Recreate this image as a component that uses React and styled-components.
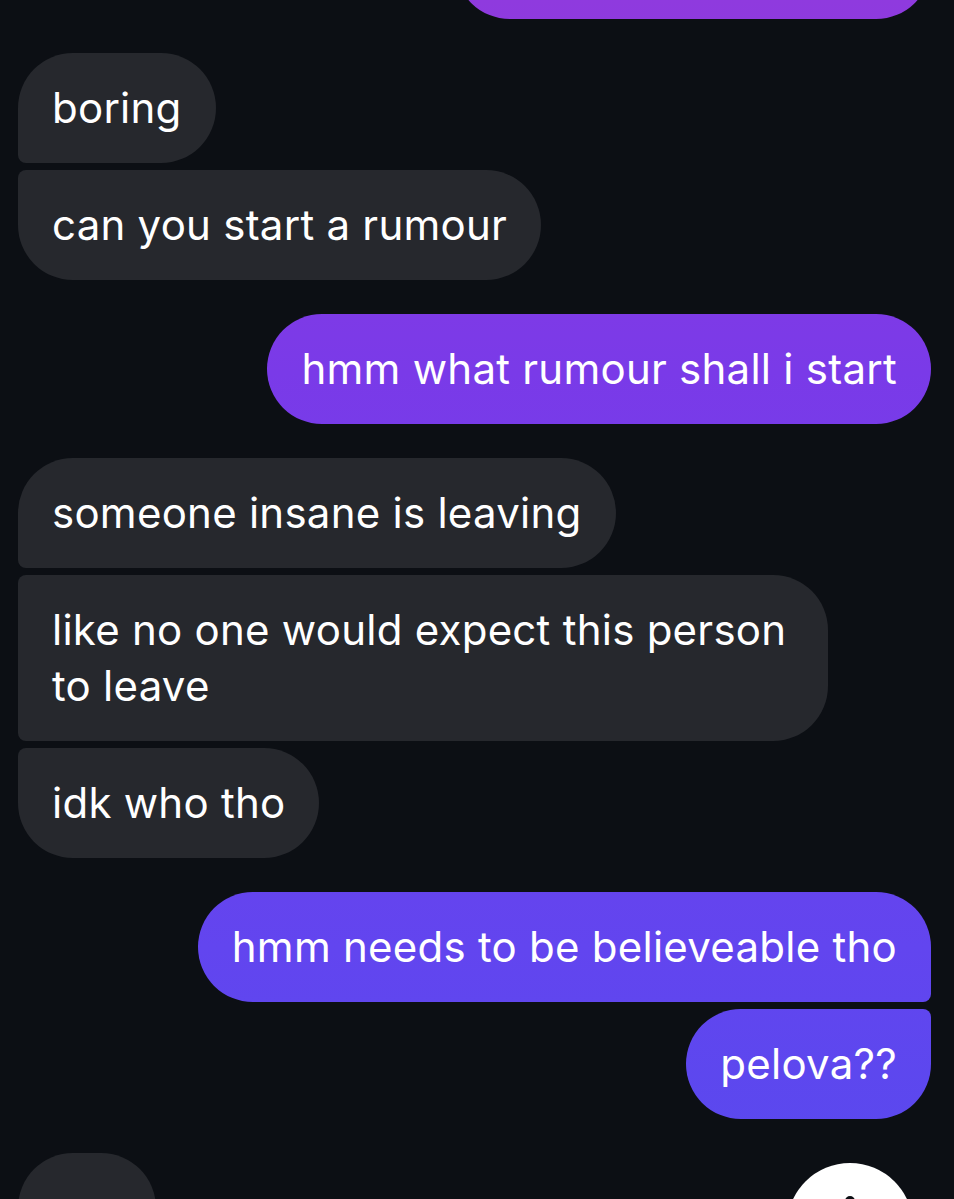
import React from "react";
import styled, { createGlobalStyle, css } from "styled-components";

const GlobalStyle = createGlobalStyle`
  html, body {
    margin: 0;
    padding: 0;
    background: #0c0f14;
  }
  body {
    font-family: Inter, "Noto Sans", sans-serif;
    -webkit-font-smoothing: antialiased;
  }
`;

const messages = [
  { id: 0, side: "me", pos: "last", ghost: true, width: 476 },
  { id: 1, side: "them", pos: "first", text: "boring" },
  { id: 2, side: "them", pos: "last", text: "can you start a rumour" },
  { id: 3, side: "me", pos: "single", text: "hmm what rumour shall i start" },
  { id: 4, side: "them", pos: "first", text: "someone insane is leaving" },
  { id: 5, side: "them", pos: "middle", text: "like no one would expect this person to leave" },
  { id: 6, side: "them", pos: "last", text: "idk who tho" },
  { id: 7, side: "me", pos: "first", text: "hmm needs to be believeable tho" },
  { id: 8, side: "me", pos: "last", text: "pelova??" },
  { id: 9, side: "them", pos: "first", text: "yes" },
];

const BIG = "55px";
const SMALL = "8px";

const corners = (side, pos) => {
  const topSmall = pos === "middle" || pos === "last";
  const bottomSmall = pos === "middle" || pos === "first";
  if (side === "them") {
    return css`
      border-radius: ${topSmall ? SMALL : BIG} ${BIG} ${BIG} ${bottomSmall ? SMALL : BIG};
    `;
  }
  return css`
    border-radius: ${BIG} ${topSmall ? SMALL : BIG} ${bottomSmall ? SMALL : BIG} ${BIG};
  `;
};

const Screen = styled.div`
  height: 1199px;
  overflow: hidden;
  position: relative;
`;

const Thread = styled.div`
  display: flex;
  flex-direction: column;
  margin-top: -91px;
  padding: 0 23px 0 18px;
`;

const Row = styled.div`
  display: flex;
  justify-content: ${(p) => (p.$side === "me" ? "flex-end" : "flex-start")};
  margin-top: ${(p) => (p.$first ? "0" : p.$grouped ? "7px" : "34px")};
`;

const Bubble = styled.div`
  box-sizing: border-box;
  max-width: 810px;
  min-height: 110px;
  padding: 27px 34px;
  font-size: 42px;
  line-height: 56px;
  color: #fff;
  letter-spacing: 0.25px;
  background: ${(p) =>
    p.$side === "me"
      ? "linear-gradient(180deg, #8f3ade 0%, #7a3ae8 31%, #6245ef 79%, #5849ee 100%) fixed"
      : "#26282d"};
  ${(p) => corners(p.$side, p.$pos)}
`;

const Fab = styled.div`
  position: absolute;
  left: 787px;
  top: 1163px;
  width: 126px;
  height: 126px;
  border-radius: 50%;
  background: #fff;
  display: flex;
  justify-content: center;
`;

const FabIcon = styled.svg`
  margin-top: 30px;
`;

export default function App() {
  return (
    <>
      <GlobalStyle />
      <Screen>
        <Thread>
          {messages.map((m, i) => {
            const prev = messages[i - 1];
            const grouped = prev && prev.side === m.side && prev.pos !== "last" && prev.pos !== "single";
            return (
              <Row key={m.id} $side={m.side} $first={i === 0} $grouped={grouped}>
                <Bubble
                  $side={m.side}
                  $pos={m.pos}
                  style={m.ghost ? { width: m.width } : undefined}
                >
                  {m.text}
                </Bubble>
              </Row>
            );
          })}
        </Thread>
        <Fab>
          <FabIcon width="40" height="40" viewBox="0 0 40 40">
            <circle cx="20" cy="8" r="5" fill="#0c0f14" />
            <rect x="17" y="10" width="6" height="26" rx="3" fill="#0c0f14" />
          </FabIcon>
        </Fab>
      </Screen>
    </>
  );
}
